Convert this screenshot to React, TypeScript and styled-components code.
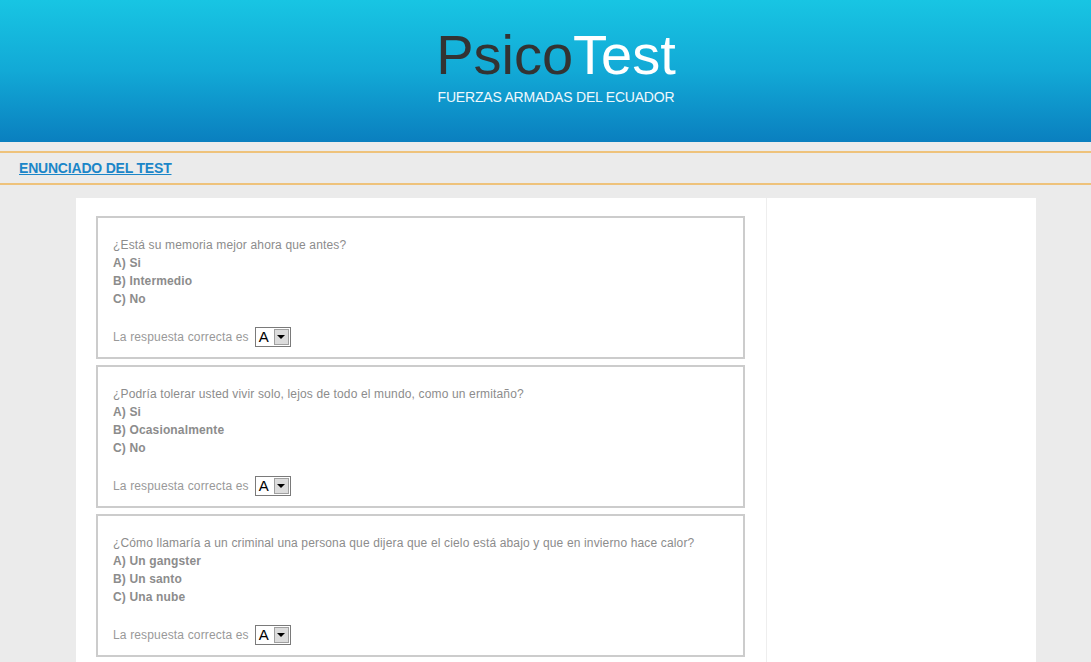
import styled, { createGlobalStyle } from 'styled-components'

const GlobalStyle = createGlobalStyle`
    html, body {
        margin: 0;
        padding: 0;
        overflow: hidden;
        background-color: #ebebeb;
        font-family: "Liberation Sans", Arial, sans-serif;
    }
`

const Page = styled.div`
    width: 1112px;
    min-height: 662px;
`

const Header = styled.header`
    height: 142px;
    box-sizing: border-box;
    padding-top: 27px;
    background: linear-gradient(to bottom, #18c5e3 0%, #12a9d6 50%, #0a7fbf 100%);
    text-align: center;
`

const Title = styled.h1`
    margin: 0;
    font-size: 56px;
    line-height: 56px;
    font-weight: normal;
    color: #333333;
    span {
        color: #ffffff;
    }
`

const Subtitle = styled.div`
    margin-top: 6px;
    font-size: 14px;
    letter-spacing: -0.2px;
    line-height: 16px;
    color: #eef8fc;
`

const SectionBar = styled.div`
    margin-top: 9px;
    border-top: 2px solid #eec27b;
    border-bottom: 2px solid #eec27b;
    height: 30px;
    line-height: 30px;
    padding-left: 19px;
    a {
        font-size: 14px;
        letter-spacing: -0.2px;
        font-weight: bold;
        color: #1b86c8;
        text-decoration: underline;
    }
`

const Panel = styled.div`
    margin: 13px auto 0;
    width: 960px;
    display: flex;
    background-color: #ffffff;
    min-height: 480px;
`

const MainColumn = styled.div`
    width: 691px;
    box-sizing: border-box;
    padding: 18px 21px 20px 20px;
    border-right: 1px solid #eeeeee;
    display: flex;
    flex-direction: column;
    gap: 6px;
`

const SideColumn = styled.div`
    flex: 1;
`

const QuestionBox = styled.div`
    border: 2px solid #cccccc;
    padding: 18px 15px 10px;
    font-size: 12px;
    letter-spacing: 0.15px;
    line-height: 18px;
    color: #8c8c8c;
`

const Option = styled.div`
    font-weight: bold;
`

const AnswerRow = styled.div`
    margin-top: 19px;
    height: 20px;
    display: flex;
    align-items: center;
    gap: 6px;
    color: #999999;
`

const FakeSelect = styled.div`
    display: flex;
    width: 34px;
    height: 18px;
    border: 1px solid #7a7a7a;
    background: #ffffff;
    .value {
        flex: 1;
        color: #000;
        font-size: 15px;
        letter-spacing: 0;
        line-height: 18px;
        padding-left: 3px;
    }
    .arrow {
        width: 15px;
        margin: 1px;
        background: #dcdcdc;
        border: 1px solid #a0a0a0;
        box-sizing: border-box;
        display: flex;
        align-items: center;
        justify-content: center;
    }
    .arrow::after {
        content: '';
        border-left: 4px solid transparent;
        border-right: 4px solid transparent;
        border-top: 4px solid #000;
    }
`

const questions = [
    {
        text: '¿Está su memoria mejor ahora que antes?',
        options: ['A) Si', 'B) Intermedio', 'C) No'],
    },
    {
        text: '¿Podría tolerar usted vivir solo, lejos de todo el mundo, como un ermitaño?',
        options: ['A) Si', 'B) Ocasionalmente', 'C) No'],
    },
    {
        text: '¿Cómo llamaría a un criminal una persona que dijera que el cielo está abajo y que en invierno hace calor?',
        options: ['A) Un gangster', 'B) Un santo', 'C) Una nube'],
    },
]

export default function App() {
    return (
        <>
            <GlobalStyle />
            <Page>
                <Header>
                    <Title>Psico<span>Test</span></Title>
                    <Subtitle>FUERZAS ARMADAS DEL ECUADOR</Subtitle>
                </Header>
                <SectionBar>
                    <a href='#'>ENUNCIADO DEL TEST</a>
                </SectionBar>
                <Panel>
                    <MainColumn>
                        {questions.map((q, i) => (
                            <QuestionBox key={i}>
                                <div>{q.text}</div>
                                {q.options.map((o) => (
                                    <Option key={o}>{o}</Option>
                                ))}
                                <AnswerRow>
                                    <span>La respuesta correcta es</span>
                                    <FakeSelect>
                                        <span className='value'>A</span>
                                        <span className='arrow'></span>
                                    </FakeSelect>
                                </AnswerRow>
                            </QuestionBox>
                        ))}
                    </MainColumn>
                    <SideColumn />
                </Panel>
            </Page>
        </>
    )
}
